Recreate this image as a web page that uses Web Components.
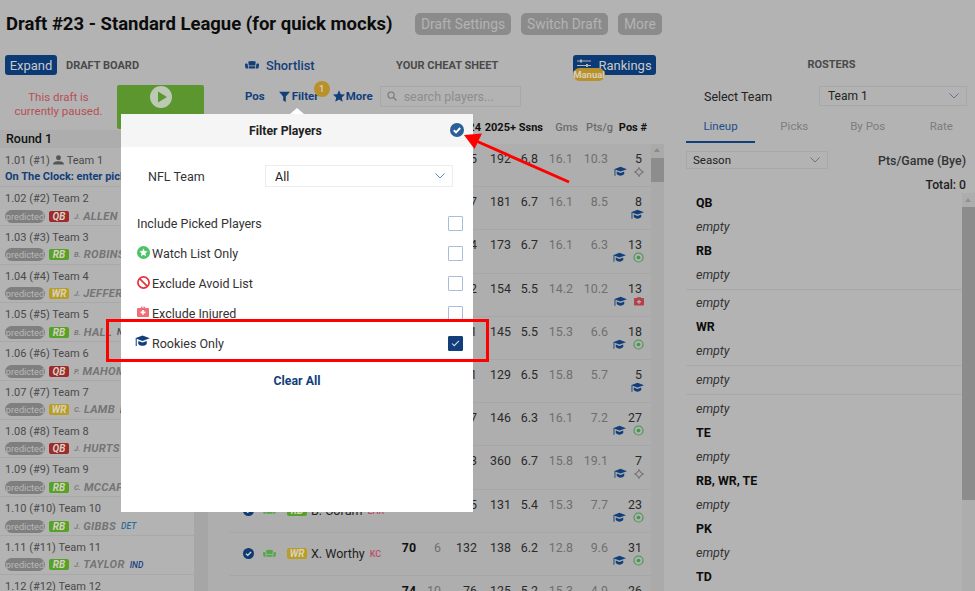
<!DOCTYPE html>
<html lang="en"><head><meta charset="utf-8"><title>Draft</title>
<style>
html,body{margin:0;padding:0;background:#b3b3b3;font-family:Roboto,"Liberation Sans",sans-serif;color:#222;}
</style></head><body>
<draft-app></draft-app>
<script>
const ICONS={
cap:'<svg viewBox="0 0 16 13" width="13" height="11"><path fill="#123f7a" d="M0 3.6 8 .6l8 3-8 3zM3.4 6.4 8 8.2l4.6-1.8v3.3C11 11.3 9.6 11.6 8 11.6s-3-.3-4.6-1.9z"/><path stroke="#123f7a" stroke-width="1.1" d="M1.2 4v7.8"/></svg>',
capL:'<svg viewBox="0 0 16 13" width="15" height="12"><path fill="#123f7a" d="M0 3.6 8 .6l8 3-8 3zM3.4 6.4 8 8.2l4.6-1.8v3.3C11 11.3 9.6 11.6 8 11.6s-3-.3-4.6-1.9z"/><path stroke="#123f7a" stroke-width="1.1" d="M1.2 4v7.8"/></svg>',
target:'<svg viewBox="0 0 12 12" width="10" height="10"><path fill="none" stroke="#777" stroke-width="1.3" d="M6 1.6 10.4 6 6 10.4 1.6 6z"/><path stroke="#777" stroke-width="1.2" d="M6 0v2.4M6 9.6V12M0 6h2.4M9.6 6H12"/></svg>',
go:'<svg viewBox="0 0 12 12" width="11" height="11"><circle cx="6" cy="6" r="5" fill="none" stroke="#3f9a48" stroke-width="1.1"/><circle cx="6" cy="6" r="2" fill="#3f9a48"/></svg>',
inj:'<svg viewBox="0 0 12 11" width="10" height="10"><path fill="#b5404a" d="M4 2V.8h4V2h3a1 1 0 0 1 1 1v7a1 1 0 0 1-1 1H1a1 1 0 0 1-1-1V3a1 1 0 0 1 1-1zm1 0h2v-.4H5zM5.2 4v1.6H3.6v1.6h1.6v1.6h1.6V7.2h1.6V5.6H6.800V4z"/></svg>',
sofa:'<svg viewBox="0 0 15 10" width="14" height="10"><path fill="#123f7a" d="M3.500 1.300C5.500.4 9.500.4 11.500 1.300L11 5.500H4zM0 4.200C0 3 2.600 3 2.900 4.300L3.300 8.700H1C.4 8.700 0 6 0 4.200zM15 4.200C15 3 12.400 3 12.100 4.300L11.700 8.700H14C14.600 8.700 15 6 15 4.200zM4 6.300H11V8.700H4z"/></svg>',
sofaG:'<svg viewBox="0 0 15 10" width="13" height="9"><path fill="#55a64a" d="M3.500 1.300C5.500.4 9.500.4 11.500 1.300L11 5.500H4zM0 4.200C0 3 2.600 3 2.900 4.300L3.300 8.700H1C.4 8.700 0 6 0 4.200zM15 4.200C15 3 12.400 3 12.100 4.300L11.700 8.700H14C14.600 8.700 15 6 15 4.200zM4 6.300H11V8.700H4z"/></svg>',
funnel:'<svg viewBox="0 0 11 11" width="11" height="11"><path fill="#123f7a" d="M0 .8h11L6.800 5.600V11L4.200 9.400V5.600z"/></svg>',
star:'<svg viewBox="0 0 12 12" width="12" height="12"><path fill="#123f7a" d="M6 .3 7.700 4.200 12 4.600 8.800 7.400 9.700 11.700 6 9.400 2.300 11.700 3.200 7.400 0 4.600 4.300 4.200z"/></svg>',
search:'<svg viewBox="0 0 11 11" width="10" height="10"><circle cx="4.500" cy="4.500" r="3.400" fill="none" stroke="#777" stroke-width="1.200"/><path stroke="#777" stroke-width="1.400" d="M7 7l3.400 3.400"/></svg>',
chev:'<svg viewBox="0 0 10 6" width="10" height="6"><path fill="none" stroke="#5f7595" stroke-width="1" d="M.5.5 5 5 9.500.5"/></svg>',
chevB:'<svg viewBox="0 0 10 6" width="10" height="6"><path fill="none" stroke="#5b86b8" stroke-width="1" d="M.5.5 5 5 9.500.5"/></svg>',
person:'<svg viewBox="0 0 12 11" width="11" height="10"><circle cx="6" cy="3" r="2.700" fill="#555"/><path fill="#555" d="M0 10.500C0 7.500 3 6.800 6 6.800s6 .7 6 3.700z"/></svg>',
sliders:'<svg viewBox="0 0 14 13" width="14" height="13"><path stroke="#b3b3b3" stroke-width="1.100" d="M0 2h14M0 6.500h14M0 11h14"/><path stroke="#b3b3b3" stroke-width="2" d="M4 .5v3M10 5v3M5 9.500v3"/></svg>',
play:'<svg viewBox="0 0 22 22" width="22" height="22"><circle cx="11" cy="11" r="11" fill="#bcc9b4"/><path fill="#5c962f" d="M8 5.500 17 11l-9 5.500z"/></svg>',
check:'<svg viewBox="0 0 14 14" width="14" height="14"><circle cx="7" cy="7" r="7" fill="#2a6099"/><path fill="none" stroke="#fff" stroke-width="1.900" d="M3.800 7.200 6 9.300 10.200 5"/></svg>',
checkD:'<svg viewBox="0 0 12 12" width="11" height="11"><circle cx="6" cy="6" r="6" fill="#0f3a73"/><path fill="none" stroke="#c9d3df" stroke-width="1.500" d="M3.200 6.200 5.200 8 8.800 4.300"/></svg>',
watch:'<svg viewBox="0 0 13 13" width="13" height="13"><circle cx="6.500" cy="6.500" r="6.500" fill="#4fc36a"/><path fill="#fff" d="M6.500 2.400 7.700 5.100 10.600 5.400 8.400 7.300 9.100 10.200 6.500 8.700 3.900 10.200 4.600 7.300 2.400 5.400 5.300 5.100z"/></svg>',
ban:'<svg viewBox="0 0 13 13" width="13" height="13"><circle cx="6.500" cy="6.500" r="5.600" fill="none" stroke="#e5343c" stroke-width="1.700"/><path stroke="#e5343c" stroke-width="1.700" d="M2.600 2.600l7.800 7.800"/></svg>',
injL:'<svg viewBox="0 0 12 11" width="12" height="11"><path fill="#ef6f78" d="M4 2V.8h4V2h3a1 1 0 0 1 1 1v7a1 1 0 0 1-1 1H1a1 1 0 0 1-1-1V3a1 1 0 0 1 1-1zm1 0h2v-.4H5zM5.200 4v1.600H3.600v1.600h1.600v1.600h1.600V7.200h1.600V5.600H6.800V4z"/></svg>'
};
function el(name,css,render){
  customElements.define(name,class extends HTMLElement{
    constructor(){super();this.attachShadow({mode:'open'});}
    connectedCallback(){this.shadowRoot.innerHTML='<style>'+css+'</style>'+render(this);}
  });
}
el('ui-icon',':host{display:inline-flex;line-height:0;flex:none}',h=>ICONS[h.getAttribute('name')]||'');
el('gray-btn',':host{display:inline-flex;align-items:center;height:22px;padding:0 6px;background:#8b8b8b;border-radius:5px;color:#b3b3b3;font-size:13.800px}',()=>'<slot></slot>');
el('blue-btn',':host{display:inline-flex;align-items:center;justify-content:center;gap:7px;height:20px;background:#0b3a75;border-radius:3px;color:#c9c9c9;font-size:13px;flex:none}',()=>'<slot></slot>');
el('pos-badge',`:host{display:inline-flex;align-items:center;justify-content:center;width:20px;height:11px;border-radius:2px;font:italic 700 10px Roboto,sans-serif;color:#d8d0c0;flex:none}
:host([p=QB]){background:#9f2a2c}:host([p=RB]){background:#56a226}:host([p=WR]){background:#b89e22}`,h=>h.getAttribute('p'));
el('ui-select',`:host{display:flex;align-items:center;justify-content:space-between;box-sizing:border-box;border:1px solid #a8a8a8;padding:0 7px 0 8px;font-size:12px;color:#222}
:host([light]){border-color:#ececec;font-size:12.500px}`,h=>'<slot></slot><ui-icon name="'+(h.hasAttribute('light')?'chevB':'chev')+'"></ui-icon>');

el('app-header',`:host{display:flex;align-items:center;height:48px;box-sizing:border-box;padding:0 0 0 6px}
h1{margin:0;font:700 18.5px/1 Roboto,sans-serif;color:#0c0c0c;white-space:nowrap;width:399px;flex:none;padding-top:1px}
.b{display:flex;gap:10px;margin:0 0 0 10px}`,()=>`<h1>Draft #23 - Standard League (for quick mocks)</h1><div class="b"><gray-btn>Draft Settings</gray-btn><gray-btn>Switch Draft</gray-btn><gray-btn>More</gray-btn></div>`);

el('board-row',`:host{display:block;box-sizing:border-box;height:38.75px;padding:4px 0 0 5px;border-bottom:1px solid #a9a9a9;white-space:nowrap;overflow:hidden;color:#4a4a4a;font-size:11px}
.t{height:16px;line-height:16px}
.p{display:flex;align-items:center;height:18px}
.chip{box-sizing:border-box;width:40px;height:13px;border-radius:7px;background:#7f7f7f;color:#b9b9b9;font-size:9.200px;line-height:13px;text-align:center;margin-right:4px;flex:none}
.i{font:italic 700 7.5px Roboto,sans-serif;color:#7c7c7c;margin:0 3px 0 5px}
.n{font:italic 700 11.300px Roboto,sans-serif;color:#757575;letter-spacing:.3px}
.c{font:italic 500 8.500px Roboto,sans-serif;margin-left:5px;color:#2c6d96}`,h=>{
 const a=k=>h.getAttribute(k);
 return `<div class="t">${a('pick')}</div><div class="p"><span class="chip">predicted</span><pos-badge p="${a('pos')}"></pos-badge><span class="i">${a('i')}</span><span class="n">${a('n')}</span><span class="c" style="color:${a('cc')||'#2c6d96'}">${a('c')}</span></div>`;});

el('draft-board',`:host{display:flex;flex-direction:column;height:100%;overflow:hidden}
.bar{display:flex;align-items:center;height:30px;padding-left:5px;gap:9px}
.ttl{font:700 11px Roboto,sans-serif;color:#4a4a4a}
.st{display:flex;height:50px;box-sizing:border-box;padding:5px 4px 1px 0}
.msg{width:117px;box-sizing:border-box;flex:none;text-align:center;color:#b84f55;font-size:11.500px;line-height:14px;padding:5px 14px 0}
.go{flex:1;background:#5c962f;border-radius:2px;display:flex;justify-content:center;padding-top:1px;box-sizing:border-box}
.rnd{height:18px;line-height:18px;padding-left:6px;font:500 12.500px/18px Roboto,sans-serif;color:#111;background:#adadad}
.b{display:flex;flex:1;min-height:0}
.l{width:194px;flex:none;overflow:hidden}
.s{flex:1;background:#a6a6a6}
.first{box-sizing:border-box;height:39px;padding:4px 0 0 5px;border-bottom:1px solid #a9a9a9;white-space:nowrap;overflow:hidden;font-size:11px;color:#4a4a4a}
.first div{display:flex;align-items:center;gap:3px;height:16px}
.oc{color:#123f7a;font-weight:700;font-size:11px;margin-top:0}`,()=>`
<div class="bar"><blue-btn style="width:52px">Expand</blue-btn><span class="ttl">DRAFT BOARD</span></div>
<div class="st"><div class="msg">This draft is currently paused.</div><div class="go"><ui-icon name="play"></ui-icon></div></div>
<div class="rnd">Round 1</div>
<div class="b"><div class="l">
<div class="first"><div>1.01 (#1) <ui-icon name="person"></ui-icon> Team 1</div><div class="oc">On The Clock: enter pick</div></div>
<board-row pick="1.02 (#2) Team 2" pos="QB" i="J." n="ALLEN" c="BUF"></board-row>
<board-row pick="1.03 (#3) Team 3" pos="RB" i="B." n="ROBINSON" c="ATL"></board-row>
<board-row pick="1.04 (#4) Team 4" pos="WR" i="J." n="JEFFERSON" c="MIN"></board-row>
<board-row pick="1.05 (#5) Team 5" pos="RB" i="B." n="HALL" c="NYJ" cc="#445"></board-row>
<board-row pick="1.06 (#6) Team 6" pos="QB" i="P." n="MAHOMES" c="KC"></board-row>
<board-row pick="1.07 (#7) Team 7" pos="WR" i="C." n="LAMB" c="DAL" cc="#445"></board-row>
<board-row pick="1.08 (#8) Team 8" pos="QB" i="J." n="HURTS" c="PHI"></board-row>
<board-row pick="1.09 (#9) Team 9" pos="RB" i="C." n="MCCAFFREY" c="SF"></board-row>
<board-row pick="1.10 (#10) Team 10" pos="RB" i="J." n="GIBBS" c="DET"></board-row>
<board-row pick="1.11 (#11) Team 11" pos="RB" i="J." n="TAYLOR" c="IND" cc="#1c3f80"></board-row>
<board-row pick="1.12 (#12) Team 12" pos="RB" i="D." n="HENRY" c="BAL"></board-row>
</div><div class="s"></div></div>`);

el('player-row',`:host{display:grid;grid-template-columns:166px 20px 25px 36px 34px 27px 35px 35px 34px;height:43.2px;box-sizing:border-box;border-bottom:1px solid #a6a6a6;font-size:12.400px;color:#2a2a2a}
.nm{display:flex;align-items:center;padding-left:13px;white-space:nowrap;font-size:12.500px;color:#222}
.sf{margin:0 11px 0 9px;display:flex}
.nm pos-badge{margin-right:4px}
.tm{font-size:9px;color:#b9506a;margin-left:5px;font-weight:500}
.v{text-align:right;padding-top:8px;line-height:14px}
.g{color:#6f6f6f}
.bd{font-weight:700;color:#111}
.pos{display:flex;flex-direction:column;align-items:flex-end;padding-top:8px;line-height:14px}
.ic{display:flex;align-items:center;gap:7px;height:13px;margin:-1px -2px 0 0}`,h=>{
 const a=k=>h.getAttribute(k)||'';
 const icons=(a('icons')||'cap').split(',').map(n=>'<ui-icon name="'+n+'"></ui-icon>').join('');
 return `<div class="nm"><ui-icon name="checkD"></ui-icon><span class="sf"><ui-icon name="sofaG"></ui-icon></span><pos-badge p="${a('p')}"></pos-badge>${a('n')}<span class="tm">${a('t')}</span></div>
<div class="v bd">${a('a')}</div><div class="v g">${a('b')}</div><div class="v">${a('c')}</div><div class="v">${a('d')}</div><div class="v">${a('e')}</div><div class="v g">${a('f')}</div><div class="v g">${a('g')}</div><div class="pos"><span>${a('h')}</span><div class="ic">${icons}</div></div>`;});

el('cheat-sheet',`:host{display:flex;flex-direction:column;height:100%;overflow:hidden}
.bar{display:grid;grid-template-columns:151px 1fr 92px;align-items:center;height:30px;padding-left:37px;padding-right:9px;font-size:13px}
.sl{display:flex;align-items:center;gap:7px;color:#123f7a;font-weight:500;font-size:12.800px}
.ttl{font:700 11px Roboto,sans-serif;color:#4a4a4a}
.rk{position:relative;display:block;width:83px;justify-self:end;margin-right:0}
.man{position:absolute;left:0;top:13px;width:32px;height:13px;border-radius:7px;background:#b8912a;color:#d9d0bd;font:700 9.500px/13px Roboto,sans-serif;text-align:center}
.ctl{display:flex;align-items:center;height:34px;padding:0 0 2px 37px;box-sizing:border-box;color:#123f7a;font:700 11.500px Roboto,sans-serif;gap:0}
.ctl .f{position:relative;display:flex;align-items:center;gap:2px;margin-left:14px;width:54px}
.bdg{position:absolute;left:35px;top:-8px;width:16px;height:16px;border-radius:8px;background:#b8912a;color:#d9d0bd;font:500 9.500px/15px Roboto,sans-serif;text-align:center}
.m{display:flex;align-items:center;gap:1px}
.srch{box-sizing:border-box;width:141px;height:21px;border:1px solid #a8a8a8;margin-left:7px;display:flex;align-items:center;gap:7px;padding-left:6px;color:#8d8d8d;font:400 12.500px Roboto,sans-serif}
.hd{display:grid;grid-template-columns:1fr 35px 27px 35px 35px 34px;padding-right:18px;height:30px;line-height:28px;font:700 11px/28px Roboto,sans-serif;color:#111;text-align:right;white-space:nowrap}
.hd .g{font-weight:500;color:#6b6b6b}
.body{flex:1;display:flex;min-height:0;overflow:hidden}
.rows{width:443px;flex:none;background:#aeaeae;box-sizing:border-box;padding-left:22px;overflow:hidden}
.sb{width:13px;background:#aaa;flex:none;position:relative}
.sb i{position:absolute;left:0;right:0;top:14px;height:24px;background:#8d8d8d}
.sb b{position:absolute;left:3px;top:4px;border:3.500px solid transparent;border-bottom:4px solid #8a8a8a;border-top:0}`,()=>{
 const R=[
 ['RB','A. Jeanty','LV','','','135','192','6.8','16.1','10.3','5','cap,target'],
 ['QB','C. Ward','TEN','','','157','181','6.7','16.1','8.5','8','cap'],
 ['WR','T. McMillan','CAR','','','144','173','6.7','16.1','6.3','13','cap,go'],
 ['RB','O. Hampton','LAC','','','142','154','5.5','14.2','10.2','13','cap,inj'],
 ['WR','T. Hunter','JAC','','','131','145','5.5','15.3','6.6','18','cap,go'],
 ['TE','T. Warren','IND','','','121','129','6.5','15.8','5.7','5','cap'],
 ['RB','K. Johnson','CHI','','','137','146','6.3','16.1','7.2','27','cap,go'],
 ['QB','J. Daniels','WAS','','','343','360','6.7','15.8','19.1','7','cap,target'],
 ['RB','B. Corum','LAR','','','125','131','5.4','15.3','7.7','23','cap,go'],
 ['WR','X. Worthy','KC','70','6','132','138','6.2','12.8','9.6','31','cap,go'],
 ['RB','T. Benson','ARI','74','10','76','125','5.2','15.3','4.9','26','cap']];
 return `<div class="bar"><div class="sl"><ui-icon name="sofa"></ui-icon>Shortlist</div><span class="ttl">YOUR CHEAT SHEET</span>
<span class="rk"><blue-btn style="display:flex;width:83px"><ui-icon name="sliders"></ui-icon>Rankings</blue-btn><span class="man">Manual</span></span></div>
<div class="ctl"><span>Pos</span><span class="f"><ui-icon name="funnel"></ui-icon>Filter<span class="bdg">1</span></span><span class="m"><ui-icon name="star"></ui-icon>More</span><div class="srch"><ui-icon name="search"></ui-icon>search players...</div></div>
<div class="hd"><span>2024</span><span>2025+</span><span>Ssns</span><span class="g">Gms</span><span class="g">Pts/g</span><span>Pos #</span></div>
<div class="body"><div class="rows">${R.map(r=>`<player-row p="${r[0]}" n="${r[1]}" t="${r[2]}" a="${r[3]}" b="${r[4]}" c="${r[5]}" d="${r[6]}" e="${r[7]}" f="${r[8]}" g="${r[9]}" h="${r[10]}" icons="${r[11]}"></player-row>`).join('')}</div><div class="sb"><b></b><i></i></div></div>`;});

el('roster-slot',`:host{display:block;height:24px;line-height:24px;padding-left:10px;font-size:12.500px;color:#111;box-sizing:border-box}
:host([head]){font-weight:700;font-size:12.400px;color:#0d0d0d}
:host([empty]){font-style:italic;color:#333}
:host([sep]){border-bottom:1px solid #a8a8a8}`,()=>'<slot></slot>');

el('roster-panel',`:host{display:flex;flex-direction:column;height:100%;overflow:hidden;box-sizing:border-box;padding-left:21px}
.ttl{height:30px;line-height:30px;text-align:center;font:700 11px/30px Roboto,sans-serif;color:#4a4a4a;padding-left:2px}
.st{display:flex;align-items:center;height:32px;padding:0 8px 0 18px;font-size:12.450px;color:#222;justify-content:space-between;box-sizing:border-box}
.tabs{display:grid;grid-template-columns:69px 73.5px 73.5px 73.5px;height:31px;margin-right:-1px;text-align:center;font-size:11.500px;color:#7d7d7d}
.tabs span{line-height:29px;padding-left:5px}
.tabs .on{color:#1d4f8a;border-bottom:2px solid #123f7a;height:31px;box-sizing:border-box;padding-left:0}
.sel{display:flex;align-items:center;justify-content:space-between;height:18px;margin:8px 9px 0 0;font:500 12.400px Roboto,sans-serif;color:#333}
.tot{text-align:right;margin-right:9px;font:500 12.200px/16px Roboto,sans-serif;color:#222;height:16px;margin-top:8px}
.body{flex:1;display:flex;min-height:0}
.list{flex:1;overflow:hidden}
.sb{width:13px;background:#adadad;position:relative;flex:none}
.sb i{position:absolute;left:0;right:0;top:14px;height:293px;background:#8c8c8c}
.sb b{position:absolute;left:3px;top:5px;border:3.500px solid transparent;border-bottom:4px solid #8f8f8f;border-top:0}`,()=>`
<div class="ttl">ROSTERS</div>
<div class="st"><span>Select Team</span><ui-select style="width:148px;height:20px">Team 1</ui-select></div>
<div class="tabs"><span class="on">Lineup</span><span>Picks</span><span>By Pos</span><span>Rate</span></div>
<div class="sel"><ui-select style="width:142px;height:18px;font-size:11.500px;font-weight:400;padding-left:6px;margin-right:-1px">Season</ui-select><span>Pts/Game (Bye)</span></div>
<div class="tot">Total: 0</div>
<div class="body"><div class="list">
<roster-slot head style="height:22px;line-height:19px">QB</roster-slot><roster-slot empty>empty</roster-slot><roster-slot head>RB</roster-slot>
<roster-slot empty sep style="height:26.600px">empty</roster-slot><roster-slot empty style="height:25.400px;padding-top:1.400px">empty</roster-slot><roster-slot head>WR</roster-slot>
<roster-slot empty sep style="height:26.600px">empty</roster-slot><roster-slot empty sep style="height:29.900px;padding-top:2.400px">empty</roster-slot><roster-slot empty style="height:25.500px;padding-top:1.500px">empty</roster-slot>
<roster-slot head>TE</roster-slot><roster-slot empty>empty</roster-slot><roster-slot head>RB, WR, TE</roster-slot><roster-slot empty>empty</roster-slot>
<roster-slot head>PK</roster-slot><roster-slot empty>empty</roster-slot><roster-slot head>TD</roster-slot>
</div><div class="sb"><b></b><i></i></div></div>`);

el('filter-row',`:host{display:flex;align-items:center;height:30px;font-size:12.500px;color:#333;padding:0 10px 0 16px}
.ic{display:flex;align-self:flex-start;margin:8px 2px 0 0;min-width:13px}
:host([cap]) .ic{margin:7px 2px 0 -2px}
.t{flex:1}
.cb{box-sizing:border-box;width:15px;height:15px;border:1.500px solid #a9bcd8;border-radius:1px;display:flex;align-items:center;justify-content:center}
:host([on]) .cb{background:#123f7a;border-color:#123f7a}`,h=>{
 const ic=h.getAttribute('icon');
 return (ic?`<span class="ic"><ui-icon name="${ic}"></ui-icon></span>`:'')+`<span class="t"><slot></slot></span><span class="cb">${h.hasAttribute('on')?'<svg viewBox="0 0 10 8" width="9" height="7"><path fill="none" stroke="#d5deea" stroke-width="1.200" d="M1 4l2.500 2.500L9 1"/></svg>':''}</span>`;});

el('filter-modal',`:host{position:absolute;left:121px;top:114px;width:352px;height:398px;background:#fff;display:block}
.car{position:absolute;left:169px;top:-6px;width:0;height:0;border:7px solid transparent;border-bottom:6px solid #fff;border-top:0}
.hd{display:flex;align-items:center;justify-content:center;height:33px;margin-bottom:-1px;background:#f5f5f5;position:relative;font:700 12.300px Roboto,sans-serif;color:#222;padding-right:23px}
.hd ui-icon{position:absolute;right:9px;top:9px}
.nfl{display:flex;align-items:center;height:22px;margin:19px 20px 21px 27px;font-size:12.500px;color:#333}
.nfl span{width:117px;flex:none}
.clear{margin-top:13px;text-align:center;height:20px;font:700 12.300px/20px Roboto,sans-serif;color:#123f7a;box-sizing:border-box;width:352px}`,()=>`
<div class="car"></div>
<div class="hd">Filter Players<ui-icon name="check"></ui-icon></div>
<div class="nfl"><span>NFL Team</span><ui-select light style="flex:1;height:22px;padding-left:9px">All</ui-select></div>
<filter-row>Include Picked Players</filter-row>
<filter-row icon="watch">Watch List Only</filter-row>
<filter-row icon="ban">Exclude Avoid List</filter-row>
<filter-row icon="injL">Exclude Injured</filter-row>
<filter-row icon="capL" cap on>Rookies Only</filter-row>
<div class="clear">Clear All</div>`);

el('callout-marks',':host{position:absolute;left:0;top:0;width:975px;height:591px;display:block;pointer-events:none}svg{display:block}',()=>`<svg width="975" height="591" viewBox="0 0 975 591">
<rect x="107.500" y="320.500" width="380" height="40" fill="none" stroke="#f00" stroke-width="3"/>
<path d="M569 182 474 140" stroke="#f00" stroke-width="3"/>
<path d="M464 135 482 133.500 474.500 149z" fill="#f00"/></svg>`);

el('draft-app',`:host{position:relative;display:block;width:975px;height:591px;overflow:hidden;background:#b3b3b3}
.g{display:grid;grid-template-columns:208px 457px 310px;height:543px;margin-top:2px}`,()=>`
<app-header></app-header>
<div class="g"><draft-board></draft-board><cheat-sheet></cheat-sheet><roster-panel></roster-panel></div>
<filter-modal></filter-modal><callout-marks></callout-marks>`);
</script></body></html>
